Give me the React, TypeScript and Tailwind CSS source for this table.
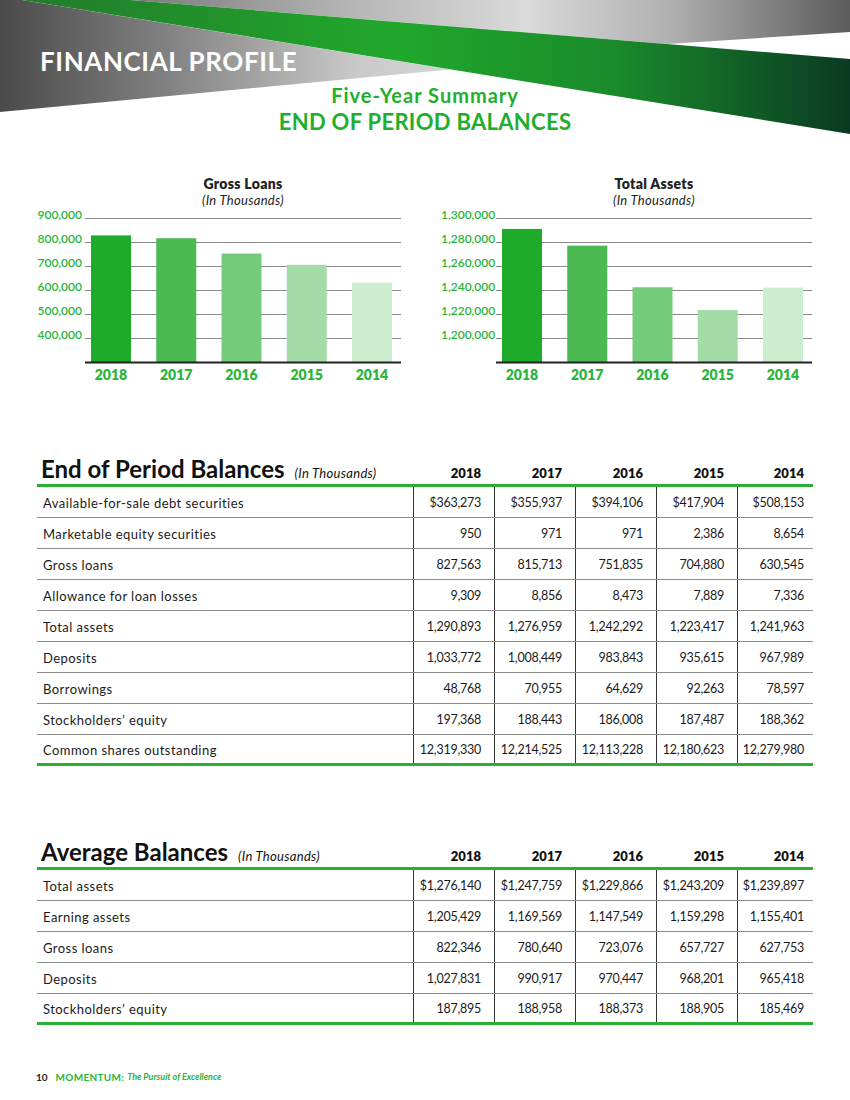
import React from "react";

const years = ["2018", "2017", "2016", "2015", "2014"];
const barColors = ["#1fab2a", "#4aba51", "#74cb7a", "#a3dca6", "#cdedcf"];

const endRows = [
  ["Available-for-sale debt securities", "$363,273", "$355,937", "$394,106", "$417,904", "$508,153"],
  ["Marketable equity securities", "950", "971", "971", "2,386", "8,654"],
  ["Gross loans", "827,563", "815,713", "751,835", "704,880", "630,545"],
  ["Allowance for loan losses", "9,309", "8,856", "8,473", "7,889", "7,336"],
  ["Total assets", "1,290,893", "1,276,959", "1,242,292", "1,223,417", "1,241,963"],
  ["Deposits", "1,033,772", "1,008,449", "983,843", "935,615", "967,989"],
  ["Borrowings", "48,768", "70,955", "64,629", "92,263", "78,597"],
  ["Stockholders’ equity", "197,368", "188,443", "186,008", "187,487", "188,362"],
  ["Common shares outstanding", "12,319,330", "12,214,525", "12,113,228", "12,180,623", "12,279,980"],
];

const avgRows = [
  ["Total assets", "$1,276,140", "$1,247,759", "$1,229,866", "$1,243,209", "$1,239,897"],
  ["Earning assets", "1,205,429", "1,169,569", "1,147,549", "1,159,298", "1,155,401"],
  ["Gross loans", "822,346", "780,640", "723,076", "657,727", "627,753"],
  ["Deposits", "1,027,831", "990,917", "970,447", "968,201", "965,418"],
  ["Stockholders’ equity", "187,895", "188,958", "188,373", "188,905", "185,469"],
];

const charts = [
  {
    title: "Gross Loans",
    ticks: ["900,000", "800,000", "700,000", "600,000", "500,000", "400,000"],
    min: 300000,
    step: 100000,
    values: [827563, 815713, 751835, 704880, 630545],
  },
  {
    title: "Total Assets",
    ticks: ["1,300,000", "1,280,000", "1,260,000", "1,240,000", "1,220,000", "1,200,000"],
    min: 1180000,
    step: 20000,
    values: [1290893, 1276959, 1242292, 1223417, 1241963],
  },
];

function Banner() {
  return (
    <div className="relative h-[140px] w-[850px] overflow-hidden">
      <svg width="850" height="140" viewBox="0 0 850 140" className="absolute left-0 top-0">
        <defs>
          <linearGradient id="grayTop" gradientUnits="userSpaceOnUse" x1="130" y1="0" x2="850" y2="0">
            <stop offset="0" stopColor="#7a7a7a" />
            <stop offset="0.3" stopColor="#b4b4b4" />
            <stop offset="0.55" stopColor="#dadada" />
            <stop offset="0.75" stopColor="#b0b0b0" />
            <stop offset="1" stopColor="#5c5c5c" />
          </linearGradient>
          <linearGradient id="grayLeft" gradientUnits="userSpaceOnUse" x1="0" y1="0" x2="450" y2="0">
            <stop offset="0" stopColor="#4a4a4a" />
            <stop offset="0.35" stopColor="#7e7e7e" />
            <stop offset="0.8" stopColor="#cacaca" />
            <stop offset="1" stopColor="#d4d4d4" />
          </linearGradient>
          <linearGradient id="band" gradientUnits="userSpaceOnUse" x1="20" y1="0" x2="850" y2="0">
            <stop offset="0" stopColor="#227a2b" />
            <stop offset="0.45" stopColor="#21a82b" />
            <stop offset="0.72" stopColor="#1a8a2b" />
            <stop offset="1" stopColor="#0a3a22" />
          </linearGradient>
        </defs>
        <polygon points="130,0 850,0 850,32 668,44" fill="url(#grayTop)" />
        <polygon points="0,0 22,0 450,69.5 0,112" fill="url(#grayLeft)" />
        <polygon points="22,0 130,0 850,59 850,134" fill="url(#band)" />
      </svg>
      <div className="relative flex flex-col">
        <div className="pl-[40px] pt-[46px] text-[26px] font-bold leading-[30px] tracking-[0.6px] text-white">
          FINANCIAL PROFILE
        </div>
        <div className="mt-[9px] text-center text-[20px] font-bold leading-[20px] tracking-[1px] text-[#1fae2d]">
          Five-Year Summary
        </div>
        <div className="mt-[6px] text-center text-[22px] font-bold leading-[22px] tracking-[0.3px] text-[#1fae2d]">
          END OF PERIOD BALANCES
        </div>
      </div>
    </div>
  );
}

function BarChart({ chart }: { chart: (typeof charts)[number] }) {
  return (
    <div className="flex flex-col">
      <div className="ml-[55px] w-[316px] text-center text-[#222]">
        <div className="text-[14px] font-extrabold leading-[16px] tracking-[0.3px]">{chart.title}</div>
        <div className="text-[13px] italic leading-[16px] tracking-[0.3px]">(In Thousands)</div>
      </div>
      <div className="flex items-start">
        <div className="-mt-[5px] flex w-[55px] flex-col pr-[3px] text-right text-[12px] font-semibold text-[#2bb43a]">
          {chart.ticks.map((t) => (
            <div key={t} className="h-[24px] leading-[24px]">
              {t}
            </div>
          ))}
        </div>
        <div className="mt-[9px] flex flex-col">
          <svg width="316" height="147" viewBox="0 0 316 147">
            {chart.ticks.map((t, i) => (
              <line key={t} x1="0" x2="316" y1={1.5 + i * 24} y2={1.5 + i * 24} stroke="#8a8a8a" strokeWidth="1" />
            ))}
            {chart.values.map((v, i) => {
              const h = ((v - chart.min) / chart.step) * 24;
              return <rect key={i} x={6 + i * 65.25} y={145 - h} width="40" height={h} fill={barColors[i]} />;
            })}
            <line x1="0" x2="316" y1="145.5" y2="145.5" stroke="#222" strokeWidth="2" />
          </svg>
          <div className="mt-[3px] flex gap-[25.25px] pl-[6px]">
            {years.map((y) => (
              <div key={y} className="w-[40px] text-center text-[14px] font-extrabold leading-[16px] text-[#2bb43a]">
                {y}
              </div>
            ))}
          </div>
        </div>
      </div>
    </div>
  );
}

function DataTable({ title, rows }: { title: string; rows: string[][] }) {
  const cols = "grid grid-cols-[376px_81px_81px_81px_81px_76px]";
  return (
    <div className="ml-[37px] w-[776px]">
      <div className={`${cols} h-[36px] items-end border-b-[3px] border-[#29b034]`}>
        <div className="flex items-baseline whitespace-nowrap pb-[1px] pl-[4px] text-[#111]">
          <span className="text-[24px] font-bold leading-[28px]">{title}</span>
          <span className="ml-[10px] text-[13px] italic tracking-[0.3px]">(In Thousands)</span>
        </div>
        {years.map((y, i) => (
          <div
            key={y}
            className={`pb-[3px] text-right text-[13px] font-extrabold leading-[16px] text-[#111] ${i === 4 ? "pr-[9px]" : "pr-[13px]"}`}>
            {y}
          </div>
        ))}
      </div>
      {rows.map((row, r) => (
        <div
          key={row[0]}
          className={`${cols} h-[31px] ${r === rows.length - 1 ? "border-b-[3px] border-[#29b034]" : "border-b border-[#8c8c8c]"}`}>
          <div className="flex items-center pl-[6px] pt-[3px] text-[13px] tracking-[0.45px] text-[#1a1a1a]">{row[0]}</div>
          {row.slice(1).map((v, i) => (
            <div
              key={i}
              className={`flex items-center justify-end border-l border-[#333] pt-[3px] text-[12.5px] tracking-[-0.25px] text-[#1a1a1a] ${i === 4 ? "pr-[9px]" : "pr-[13px]"}`}>
              {v}
            </div>
          ))}
        </div>
      ))}
    </div>
  );
}

export default function App() {
  return (
    <div className="relative h-[1100px] w-[850px] overflow-hidden bg-white font-['Lato',sans-serif]">
      <Banner />

      {/* charts */}
      <div className="mt-[36px] flex gap-[40px] pl-[30px]">
        {charts.map((c) => (
          <BarChart key={c.title} chart={c} />
        ))}
      </div>

      {/* tables */}
      <div className="mt-[68px]">
        <DataTable title="End of Period Balances" rows={endRows} />
      </div>
      <div className="mt-[68px]">
        <DataTable title="Average Balances" rows={avgRows} />
      </div>

      {/* footer */}
      <div className="mt-[46px] flex items-center pl-[36px] text-[10px] leading-[12px]">
        <span className="font-bold text-[#222]">10</span>
        <span className="ml-[8px] font-bold tracking-[0.3px] text-[#2bb43a]">MOMENTUM:</span>
        <span className="ml-[3px] text-[9px] font-bold italic text-[#2bb43a]">The Pursuit of Excellence</span>
      </div>
    </div>
  );
}
